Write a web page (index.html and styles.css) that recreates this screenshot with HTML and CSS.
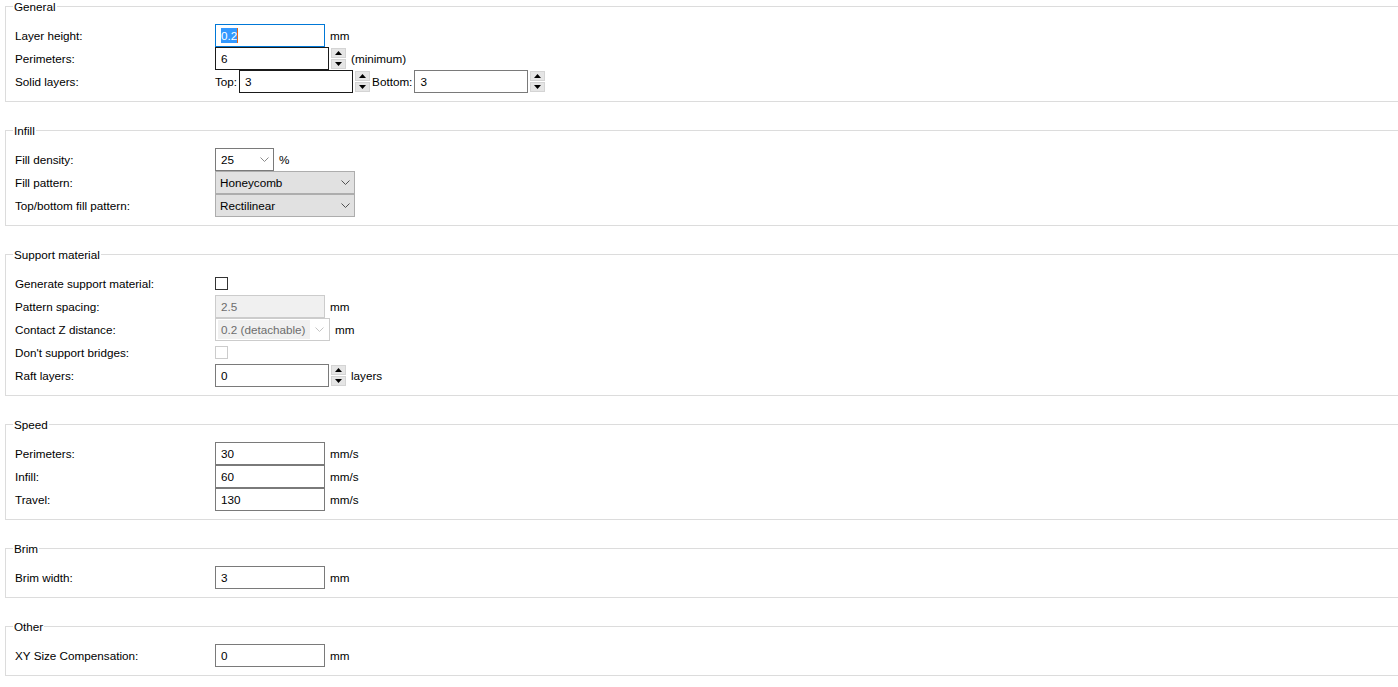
FILE: index.html
```html
<!DOCTYPE html>
<html>
<head>
<meta charset="utf-8">
<title>Print settings</title>
<link rel="stylesheet" href="styles.css">
</head>
<body>
<div class="page">

  <fieldset class="group">
    <legend>General</legend>
    <div class="row">
      <span class="label">Layer height:</span>
      <div class="box focused w110"><span class="sel">0.2</span><span class="caret"></span></div>
      <span class="unit">mm</span>
    </div>
    <div class="row">
      <span class="label">Perimeters:</span>
      <div class="box dark w114">6</div>
      <div class="spin">
        <span class="spin-btn"><svg width="7" height="4" viewBox="0 0 7 4"><path d="M0 4 L3.5 0 L7 4 Z" fill="#000"/></svg></span>
        <span class="spin-btn"><svg width="7" height="4" viewBox="0 0 7 4"><path d="M0 0 L3.5 4 L7 0 Z" fill="#000"/></svg></span>
      </div>
      <span class="unit after-spin">(minimum)</span>
    </div>
    <div class="row">
      <span class="label">Solid layers:</span>
      <span class="inline-label">Top:</span>
      <div class="box dark w114">3</div>
      <div class="spin">
        <span class="spin-btn"><svg width="7" height="4" viewBox="0 0 7 4"><path d="M0 4 L3.5 0 L7 4 Z" fill="#000"/></svg></span>
        <span class="spin-btn"><svg width="7" height="4" viewBox="0 0 7 4"><path d="M0 0 L3.5 4 L7 0 Z" fill="#000"/></svg></span>
      </div>
      <span class="inline-label after-spin-label">Bottom:</span>
      <div class="box w114">3</div>
      <div class="spin">
        <span class="spin-btn"><svg width="7" height="4" viewBox="0 0 7 4"><path d="M0 4 L3.5 0 L7 4 Z" fill="#000"/></svg></span>
        <span class="spin-btn"><svg width="7" height="4" viewBox="0 0 7 4"><path d="M0 0 L3.5 4 L7 0 Z" fill="#000"/></svg></span>
      </div>
    </div>
  </fieldset>

  <fieldset class="group">
    <legend>Infill</legend>
    <div class="row">
      <span class="label">Fill density:</span>
      <div class="box combo w59"><span class="combo-text">25</span><svg class="chev" width="9" height="5" viewBox="0 0 9 5"><path d="M0.5 0.5 L4.5 4.5 L8.5 0.5" fill="none" stroke="#8a8a8a" stroke-width="1"/></svg></div>
      <span class="unit">%</span>
    </div>
    <div class="row">
      <span class="label">Fill pattern:</span>
      <div class="box choice w140"><span class="combo-text">Honeycomb</span><svg class="chev" width="9" height="5" viewBox="0 0 9 5"><path d="M0.5 0.5 L4.5 4.5 L8.5 0.5" fill="none" stroke="#505050" stroke-width="1"/></svg></div>
    </div>
    <div class="row">
      <span class="label">Top/bottom fill pattern:</span>
      <div class="box choice w140"><span class="combo-text">Rectilinear</span><svg class="chev" width="9" height="5" viewBox="0 0 9 5"><path d="M0.5 0.5 L4.5 4.5 L8.5 0.5" fill="none" stroke="#505050" stroke-width="1"/></svg></div>
    </div>
  </fieldset>

  <fieldset class="group">
    <legend>Support material</legend>
    <div class="row">
      <span class="label">Generate support material:</span>
      <span class="check"></span>
    </div>
    <div class="row">
      <span class="label">Pattern spacing:</span>
      <div class="box disabled w110">2.5</div>
      <span class="unit">mm</span>
    </div>
    <div class="row">
      <span class="label">Contact Z distance:</span>
      <div class="box disabled-combo w115"><span class="dc-text">0.2 (detachable)</span><svg class="chev" width="9" height="5" viewBox="0 0 9 5"><path d="M0.5 0.5 L4.5 4.5 L8.5 0.5" fill="none" stroke="#c4c4c4" stroke-width="1"/></svg></div>
      <span class="unit">mm</span>
    </div>
    <div class="row">
      <span class="label">Don't support bridges:</span>
      <span class="check check-disabled"></span>
    </div>
    <div class="row">
      <span class="label">Raft layers:</span>
      <div class="box w114">0</div>
      <div class="spin">
        <span class="spin-btn"><svg width="7" height="4" viewBox="0 0 7 4"><path d="M0 4 L3.5 0 L7 4 Z" fill="#000"/></svg></span>
        <span class="spin-btn"><svg width="7" height="4" viewBox="0 0 7 4"><path d="M0 0 L3.5 4 L7 0 Z" fill="#000"/></svg></span>
      </div>
      <span class="unit after-spin">layers</span>
    </div>
  </fieldset>

  <fieldset class="group">
    <legend>Speed</legend>
    <div class="row">
      <span class="label">Perimeters:</span>
      <div class="box w110">30</div>
      <span class="unit">mm/s</span>
    </div>
    <div class="row">
      <span class="label">Infill:</span>
      <div class="box w110">60</div>
      <span class="unit">mm/s</span>
    </div>
    <div class="row">
      <span class="label">Travel:</span>
      <div class="box w110">130</div>
      <span class="unit">mm/s</span>
    </div>
  </fieldset>

  <fieldset class="group">
    <legend>Brim</legend>
    <div class="row">
      <span class="label">Brim width:</span>
      <div class="box w110">3</div>
      <span class="unit">mm</span>
    </div>
  </fieldset>

  <fieldset class="group">
    <legend>Other</legend>
    <div class="row">
      <span class="label">XY Size Compensation:</span>
      <div class="box w110">0</div>
      <span class="unit">mm</span>
    </div>
  </fieldset>

</div>
</body>
</html>
```

FILE: styles.css
```css
html, body {
  margin: 0;
  padding: 0;
  background: #ffffff;
}

body {
  font-family: "Liberation Sans", Arial, sans-serif;
  font-size: 11.7px;
  color: #000000;
  overflow: hidden;
}

.page {
  display: block;
}

.group {
  margin: 0 0 22px 5px;
  padding: 11px 0 8px 9px;
  border: 1px solid #dcdcdc;
  border-right: none;
  min-width: 0;
}

.group legend {
  margin-left: -2px;
  padding: 0 1px;
  line-height: 13px;
  height: 13px;
  font-size: 11.7px;
}

.row {
  display: flex;
  align-items: center;
  height: 23px;
  line-height: 14px;
  white-space: nowrap;
}

.label {
  flex: none;
  width: 200px;
}

.box {
  flex: none;
  box-sizing: border-box;
  height: 23px;
  border: 1px solid #7a7a7a;
  background: #ffffff;
  display: flex;
  align-items: center;
  padding-left: 5px;
}

.w59 { width: 59px; }
.w110 { width: 110px; }
.w114 { width: 114px; }
.w115 { width: 115px; }
.w140 { width: 140px; }

.dark {
  border-color: #1a1a1a;
}

.focused {
  border-color: #0078d7;
}

.sel {
  background: #3399ff;
  color: #ffffff;
  line-height: 15px;
}

.caret {
  display: inline-block;
  width: 1px;
  height: 15px;
  background: #e0651c;
}

.unit {
  margin-left: 5px;
}

.after-spin {
  margin-left: 5px;
}

.inline-label {
  margin-right: 2px;
}

.after-spin-label {
  margin-left: 2px;
}

.spin {
  flex: none;
  margin-left: 2px;
  width: 15px;
  height: 21px;
  display: flex;
  flex-direction: column;
  justify-content: space-between;
}

.spin-btn {
  box-sizing: border-box;
  height: 10px;
  background: #e5e5e5;
  border: 1px solid #d4d4d4;
  display: flex;
  align-items: center;
  justify-content: center;
}

.combo {
  justify-content: space-between;
  padding-right: 4px;
}

.choice {
  background: #e1e1e1;
  border-color: #adadad;
  justify-content: space-between;
  padding-left: 4px;
  padding-right: 4px;
}

.chev {
  flex: none;
  display: block;
}

.disabled {
  background: #f0f0f0;
  border-color: #cccccc;
  color: #6d6d6d;
}

.disabled-combo {
  border-color: #cccccc;
  color: #6d6d6d;
  padding: 1px 5px 1px 2px;
  justify-content: space-between;
}

.dc-text {
  background: #f0f0f0;
  height: 19px;
  width: 92px;
  box-sizing: border-box;
  padding-left: 3px;
  display: flex;
  align-items: center;
}

.check {
  flex: none;
  box-sizing: border-box;
  width: 13px;
  height: 13px;
  border: 1px solid #333333;
  background: #ffffff;
}

.check-disabled {
  border-color: #cccccc;
}
```
